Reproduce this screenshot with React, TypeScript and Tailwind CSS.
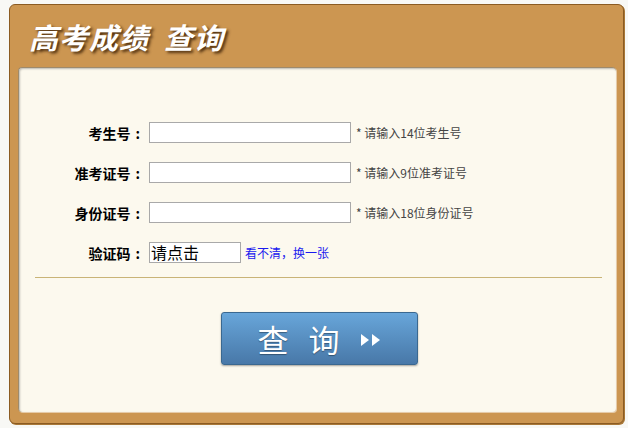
import React from 'react';

const FONT = '"Noto Sans CJK SC", "Noto Sans", "Liberation Sans", sans-serif';

const fields = [
  { label: '考生号', hint: '* 请输入14位考生号' },
  { label: '准考证号', hint: '* 请输入9位准考证号' },
  { label: '身份证号', hint: '* 请输入18位身份证号' },
];

const Label: React.FC<{ text: string }> = ({ text }) => (
  <label className="w-[125px] text-right text-[14px] font-bold text-black leading-none">
    {text}
    <span className="inline-block ml-[5px] mr-[4px]">:</span>
  </label>
);

const App: React.FC = () => {
  return (
    <div className="w-[628px] h-[428px] bg-[#f8f8f5] pt-[4px] pl-[9px]" style={{ fontFamily: FONT }}>
      <div className="w-[615px] h-[420px] rounded-[6px] border border-[#8b5b22] bg-[#cc9651] shadow-[1px_1px_0_#a87838] flex flex-col">
        {/* header */}
        <div className="h-[62px] flex items-center pl-[19px] pt-[1px]">
          <h1 className="text-white text-[29px] font-bold italic leading-none tracking-[1px] [text-shadow:2px_2px_3px_rgba(50,25,0,0.85)]">
            高考成绩<span className="inline-block w-[15px]" />查询
          </h1>
        </div>

        {/* panel */}
        <div className="ml-[8px] w-[598px] h-[345px] rounded-[4px] bg-[#fcf9ee] border-t border-l border-[#9f8a6b] shadow-[inset_1px_1px_2px_rgba(0,0,0,0.25),1px_1px_0_rgba(255,255,255,0.5)] pt-[54px] flex flex-col">
          <div className="flex flex-col gap-[19px]">
            {fields.map((f) => (
              <div key={f.label} className="flex items-center h-[21px]">
                <Label text={f.label} />
                <input
                  type="text"
                  className="ml-[5px] w-[202px] h-[21px] border border-[#a9a9a9] bg-white outline-none"
                />
                <span className="ml-[5px] text-[12px] text-[#444]">{f.hint}</span>
              </div>
            ))}
            <div className="flex items-center h-[21px]">
              <Label text="验证码" />
              <div className="ml-[5px] w-[92px] h-[21px] border border-[#a9a9a9] bg-white text-[16px] leading-[19px] text-black pl-[1px]">
                请点击
              </div>
              <a className="ml-[4px] text-[12px] text-[#1a1aee] cursor-pointer">看不清，换一张</a>
            </div>
          </div>

          <div className="mt-[14px] ml-[16px] w-[567px] h-px bg-[#c9b477]" />

          <div className="mt-[34px] flex justify-center pl-[4px]">
            <button className="w-[197px] h-[53px] rounded-[3px] border border-[#3a6890] bg-gradient-to-b from-[#68a6da] to-[#4878a8] shadow-[0_1px_2px_rgba(0,0,0,0.35)] flex items-center justify-center text-white text-[31px] leading-none [text-shadow:0_1px_1px_rgba(0,0,0,0.35)]">
              <span>查</span>
              <span className="ml-[20px]">询</span>
              <svg className="ml-[20px] mt-[2px]" width="22" height="14" viewBox="0 0 22 14">
                <polygon points="1,1 9,7 1,13" fill="#fff" />
                <polygon points="12,1 20,7 12,13" fill="#fff" />
              </svg>
            </button>
          </div>
        </div>
      </div>
    </div>
  );
};

export default App;
